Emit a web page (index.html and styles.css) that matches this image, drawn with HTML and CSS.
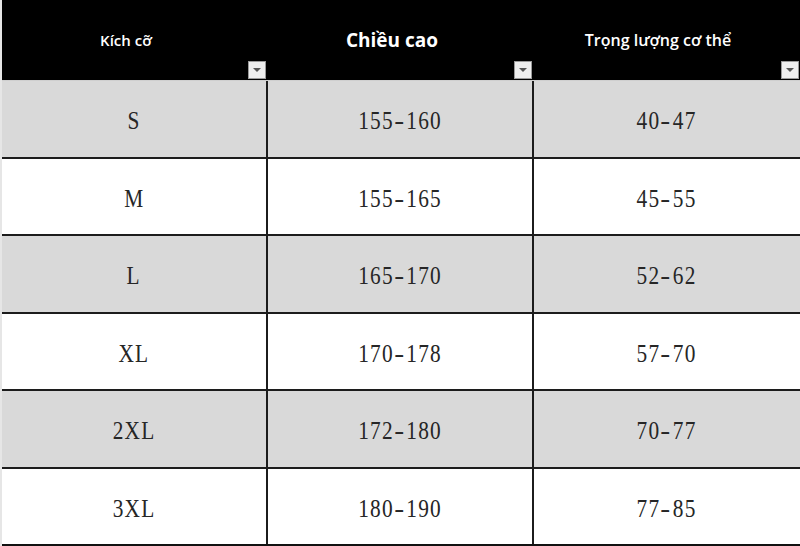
FILE: index.html
```html
<!DOCTYPE html>
<html lang="vi">
<head>
<meta charset="utf-8">
<title>Bảng kích cỡ</title>
<link rel="stylesheet" href="styles.css">
</head>
<body>
<div class="sheet">
  <div class="row head">
    <div class="cell hcell"><span class="h-small">Kích cỡ</span><span class="dd"></span></div>
    <div class="cell hcell"><span class="h-big">Chiều cao</span><span class="dd"></span></div>
    <div class="cell hcell"><span class="h-mid">Trọng lượng cơ thể</span><span class="dd"></span></div>
  </div>
  <div class="row gray"><div class="cell"><span class="v">S</span></div><div class="cell"><span class="v">155<span class="dash">-</span>160</span></div><div class="cell"><span class="v">40<span class="dash">-</span>47</span></div></div>
  <div class="row"><div class="cell"><span class="v">M</span></div><div class="cell"><span class="v">155<span class="dash">-</span>165</span></div><div class="cell"><span class="v">45<span class="dash">-</span>55</span></div></div>
  <div class="row gray"><div class="cell"><span class="v">L</span></div><div class="cell"><span class="v">165<span class="dash">-</span>170</span></div><div class="cell"><span class="v">52<span class="dash">-</span>62</span></div></div>
  <div class="row"><div class="cell"><span class="v">XL</span></div><div class="cell"><span class="v">170<span class="dash">-</span>178</span></div><div class="cell"><span class="v">57<span class="dash">-</span>70</span></div></div>
  <div class="row gray"><div class="cell"><span class="v">2XL</span></div><div class="cell"><span class="v">172<span class="dash">-</span>180</span></div><div class="cell"><span class="v">70<span class="dash">-</span>77</span></div></div>
  <div class="row last"><div class="cell"><span class="v">3XL</span></div><div class="cell"><span class="v">180<span class="dash">-</span>190</span></div><div class="cell"><span class="v">77<span class="dash">-</span>85</span></div></div>
</div>
</body>
</html>
```
FILE: styles.css
```css
html, body {
  margin: 0;
  padding: 0;
  background: #e6e6e6;
}
.sheet {
  width: 798px;
  margin-left: 2px;
  padding-top: 4px;
}
.row {
  display: grid;
  grid-template-columns: 264px 264px 266px;
  column-gap: 2px;
  background: #1c1c1c;
  border-bottom: 2px solid #1c1c1c;
  height: 75.5px;
}
.row .cell {
  background: #ffffff;
  display: flex;
  align-items: center;
  justify-content: center;
  font-family: "Liberation Serif", "DejaVu Serif", serif;
  font-size: 26px;
  color: #262626;
  padding-top: 5px;
  box-sizing: border-box;
}
.v {
  display: inline-block;
  transform: scaleX(0.82);
  letter-spacing: 1.5px;
  white-space: nowrap;
}
.dash {
  display: inline-block;
  margin: 0 3px 0 2px;
  transform: scaleX(1.4);
}
.row.gray .cell {
  background: #d9d9d9;
}
.row.last {
  border-bottom: 3px solid #111;
}
.row.head {
  height: 76px;
  background: #000;
  column-gap: 0;
  grid-template-columns: 266px 266px 266px;
  border-bottom: 1px solid #cfcfcf;
}
.row.head .hcell {
  background: #000;
  position: relative;
  color: #fff;
  font-family: "Open Sans", "Noto Sans", sans-serif;
  font-weight: 600;
  padding: 0 18px 0 0;
  align-items: center;
  margin-top: -4px;
}
.h-small { font-size: 15px; }
.h-big { font-size: 19px; font-weight: 700; }
.h-mid { font-size: 16px; }
.dd {
  position: absolute;
  right: 1px;
  bottom: 1px;
  width: 16px;
  height: 16px;
  background: #eeeeee;
  border: 1px solid #9a9a9a;
}
.row.head .hcell:nth-child(1) .dd,
.row.head .hcell:nth-child(2) .dd { right: 2px; }
.dd::after {
  content: "";
  position: absolute;
  left: 4px;
  top: 6px;
  border-left: 4px solid transparent;
  border-right: 4px solid transparent;
  border-top: 4px solid #555;
}
```
